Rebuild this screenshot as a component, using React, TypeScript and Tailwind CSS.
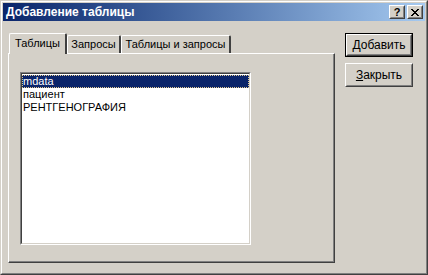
import React from "react";

const font = { fontFamily: '"Liberation Sans", Arial, sans-serif' };

const raised =
  "border border-t-white border-l-white border-r-[#404040] border-b-[#404040]";

const WinButton = ({
  label,
  accel,
  isDefault,
}: {
  label: string;
  accel: string;
  isDefault?: boolean;
}) => {
  const inner = (
    <div className={`${raised} h-full`}>
      <div className="h-full border border-t-[#d4d0c8] border-l-[#d4d0c8] border-r-[#808080] border-b-[#808080] flex items-center justify-center text-[12px] text-black">
        <span>
          <span className="underline">{accel}</span>
          {label}
        </span>
      </div>
    </div>
  );
  return isDefault ? (
    <div className="w-[68px] h-[24px] border border-black">{inner}</div>
  ) : (
    <div className="w-[68px] h-[24px]">{inner}</div>
  );
};

const Tab = ({ label, active, width }: { label: string; active?: boolean; width: string }) => {
  if (active) {
    return (
      <div
        className={`${width} h-[21px] -mb-px relative z-10 bg-[#d4d0c8] border-t border-l border-t-white border-l-white border-r-2 border-r-[#404040] rounded-tl-[2px] rounded-tr-[2px] flex items-center justify-center whitespace-nowrap text-[11px] pb-[1px]`}
      >
        {label}
      </div>
    );
  }
  return (
    <div
      className={`${width} h-[18px] bg-[#d4d0c8] border-t border-l border-t-white border-l-white border-r-2 border-r-[#404040] rounded-tl-[2px] rounded-tr-[2px] flex items-center justify-center whitespace-nowrap text-[11px]`}
    >
      {label}
    </div>
  );
};

export default function App() {
  const rows = ["mdata", "пациент", "РЕНТГЕНОГРАФИЯ"];

  return (
    <div style={font} className="w-[428px] h-[275px] bg-[#d4d0c8] select-none">
      <div className="h-full border border-t-[#d4d0c8] border-l-[#d4d0c8] border-r-[#404040] border-b-[#404040]">
        <div className="h-full border border-t-white border-l-white border-r-[#808080] border-b-[#808080] p-px flex flex-col">
          {/* title bar */}
          <div className="h-[18px] bg-gradient-to-r from-[#0a246a] to-[#a6caf0] flex items-center pl-[3px] pr-[2px]">
            <span className="text-white font-bold text-[12px] flex-1">
              Добавление таблицы
            </span>
            <div className="flex gap-[2px]">
              <div className={`${raised} w-[16px] h-[14px] bg-[#d4d0c8]`}>
                <div className="h-full border border-t-[#d4d0c8] border-l-[#d4d0c8] border-r-[#808080] border-b-[#808080] flex items-center justify-center text-[11px] font-bold leading-none text-black">
                  ?
                </div>
              </div>
              <div className={`${raised} w-[16px] h-[14px] bg-[#d4d0c8]`}>
                <div className="h-full border border-t-[#d4d0c8] border-l-[#d4d0c8] border-r-[#808080] border-b-[#808080] flex items-center justify-center">
                  <svg width="8" height="7" viewBox="0 0 8 7" shapeRendering="crispEdges">
                    <path
                      d="M0 0h2v1h-2zM6 0h2v1h-2zM1 1h2v1h-2zM5 1h2v1h-2zM2 2h4v1h-4zM3 3h2v1h-2zM2 4h4v1h-4zM1 5h2v1h-2zM5 5h2v1h-2zM0 6h2v1h-2zM6 6h2v1h-2z"
                      fill="#000"
                    />
                  </svg>
                </div>
              </div>
            </div>
          </div>

          {/* body */}
          <div className="flex-1 flex pl-[5px] pt-[11px]">
            {/* tab control */}
            <div className="w-[327px] flex flex-col">
              <div className="flex items-end h-[21px] pl-px">
                <Tab label="Таблицы" active width="w-[58px]" />
                <Tab label="Запросы" width="w-[54px]" />
                <Tab label="Таблицы и запросы" width="w-[110px]" />
              </div>
              <div className="h-[210px] border border-t-white border-l-white border-r-[#404040] border-b-[#404040]">
                <div className="h-full border-r border-b border-r-[#808080] border-b-[#808080] pl-[11px] pt-[18px]">
                  {/* listbox */}
                  <div className="w-[231px] h-[173px] border border-t-[#808080] border-l-[#808080] border-r-white border-b-white">
                    <div className="h-full border border-t-[#404040] border-l-[#404040] border-r-[#d4d0c8] border-b-[#d4d0c8] bg-white pt-px">
                      {rows.map((r, i) => (
                        <div
                          key={r}
                          className={`h-[13px] pl-px text-[11px] leading-[13px] ${
                            i === 0
                              ? "bg-[#0a246a] text-white outline outline-1 outline-dotted outline-[#e0c890] -outline-offset-1"
                              : "text-black"
                          }`}
                        >
                          {r}
                        </div>
                      ))}
                    </div>
                  </div>
                </div>
              </div>
            </div>

            {/* buttons */}
            <div className="flex flex-col gap-[6px] ml-[10px] pt-px">
              <WinButton label="обавить" accel="Д" isDefault />
              <WinButton label="акрыть" accel="З" />
            </div>
          </div>
        </div>
      </div>
    </div>
  );
}
